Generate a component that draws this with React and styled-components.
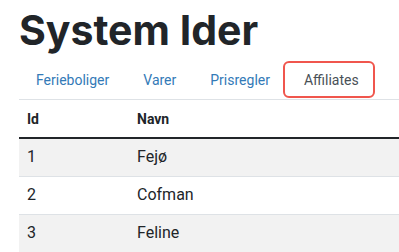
import styled, { createGlobalStyle } from 'styled-components';

const GlobalStyle = createGlobalStyle`
  body {
    margin: 0;
    background: #fff;
    color: #212529;
    font-family: Roboto, "Liberation Sans", Arial, sans-serif;
    font-size: 16px;
  }
`;

const Page = styled.div`
  padding: 6px 0 0 19px;
  overflow: hidden;
`;

const Title = styled.h1`
  margin: 0;
  font-family: Inter, Roboto, sans-serif;
  font-size: 41px;
  line-height: 48px;
  font-weight: 700;
  color: #212529;
`;

const Tabs = styled.nav`
  display: flex;
  margin-top: 7px;
  border-bottom: 1px solid #dee2e6;
`;

const Tab = styled.a`
  display: block;
  margin: 0 0 1px ${(p) => (p.$active ? '-4px' : '0')};
  padding: ${(p) => (p.$active ? '8px 14px 6px 19px' : '8px 15px 6px')};
  font-size: 14px;
  line-height: 19px;
  border: 2px solid ${(p) => (p.$active ? '#f0564d' : 'transparent')};
  border-radius: 6px;
  color: ${(p) => (p.$active ? '#495057' : '#337ab7')};
  text-decoration: none;
  cursor: pointer;
`;

const Table = styled.table`
  width: 100%;
  border-collapse: collapse;
  color: #212529;
`;

const Th = styled.th`
  text-align: left;
  font-size: 14px;
  font-weight: 700;
  padding: 7px 8px 6px;
  line-height: 24px;
  border-bottom: 2px solid #212529;
  width: ${(p) => p.$width || 'auto'};
`;

const Row = styled.tr`
  background: ${(p) => (p.$striped ? '#f2f2f2' : '#fff')};
`;

const Td = styled.td`
  padding: 6px 8px 7px;
  line-height: 24px;
  border-bottom: 1px solid #dee2e6;
`;

const tabs = ['Ferieboliger', 'Varer', 'Prisregler', 'Affiliates'];
const rows = [
  { id: 1, navn: 'Fejø' },
  { id: 2, navn: 'Cofman' },
  { id: 3, navn: 'Feline' },
];

function App() {
  return (
    <Page>
      <GlobalStyle />
      <Title>System Ider</Title>
      <Tabs>
        {tabs.map((t) => (
          <Tab key={t} $active={t === 'Affiliates'}>{t}</Tab>
        ))}
      </Tabs>
      <Table>
        <thead>
          <tr>
            <Th $width="94px">Id</Th>
            <Th>Navn</Th>
          </tr>
        </thead>
        <tbody>
          {rows.map((r, i) => (
            <Row key={r.id} $striped={i % 2 === 0}>
              <Td>{r.id}</Td>
              <Td>{r.navn}</Td>
            </Row>
          ))}
        </tbody>
      </Table>
    </Page>
  );
}

export default App;
